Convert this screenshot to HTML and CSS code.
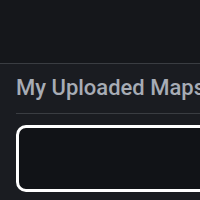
FILE: index.html
```html
<!DOCTYPE html>
<html>
<head>
<meta charset="utf-8">
<link rel="stylesheet" href="styles.css">
</head>
<body>
<div class="topbar"></div>
<section class="panel">
  <h2 class="title">My Uploaded Maps</h2>
  <div class="divider"></div>
  <div class="dropbox"></div>
</section>
</body>
</html>
```
FILE: styles.css
```css
html, body {
  margin: 0;
  padding: 0;
  background: #1a1c21;
  width: 200px;
  height: 200px;
  overflow: hidden;
}
.topbar {
  height: 63px;
  background: #15171b;
  border-bottom: 1px solid #3a3d42;
}
.panel {
  padding: 10px 0 0 16px;
  width: 260px;
}
.title {
  margin: 0;
  font-family: Roboto, "Noto Sans", sans-serif;
  font-weight: 500;
  font-size: 22px;
  line-height: 28px;
  color: #a7acb5;
  white-space: nowrap;
}
.divider {
  margin-top: 11px;
  height: 1px;
  background: #3a3d42;
}
.dropbox {
  margin-top: 11px;
  height: 61px;
  border: 3px solid #ffffff;
  border-radius: 10px;
  background: #111317;
}
```
